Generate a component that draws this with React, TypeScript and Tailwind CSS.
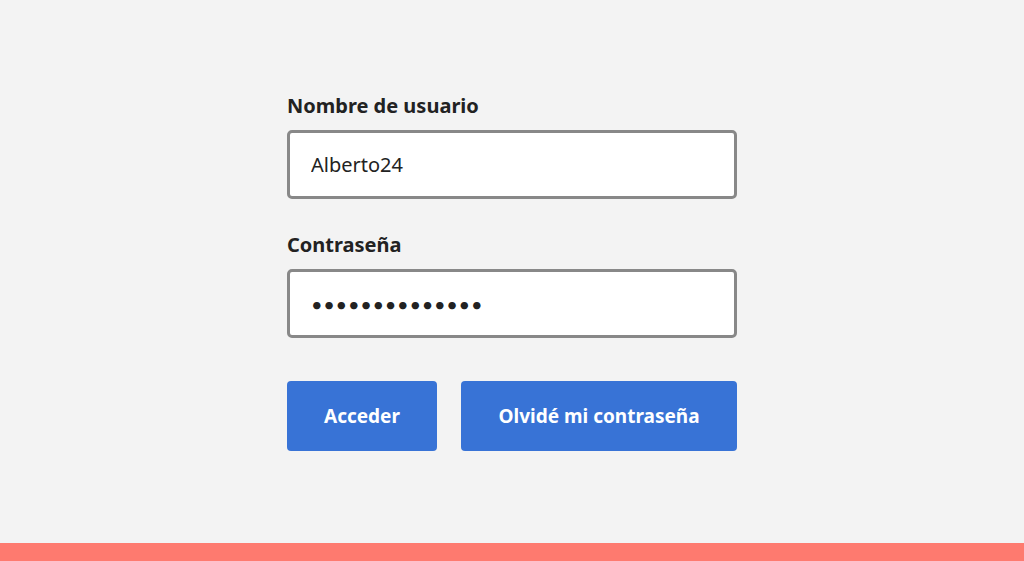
import React, { useState } from 'react'

const App: React.FC = () => {
  const [username, setUsername] = useState<string>('Alberto24')
  const [password, setPassword] = useState<string>('contraseña2024')

  return (
    <div
      className="flex min-h-[561px] w-full flex-col bg-[#f3f3f3]"
      style={{ fontFamily: '"Noto Sans", Lato, sans-serif' }}
    >
      <div className="flex flex-1 justify-center pt-[94px]">
        <form className="flex w-[450px] flex-col" onSubmit={(e) => e.preventDefault()}>
          {/* Username */}
          <label className="mb-[12px] text-[20px] font-bold leading-6 text-[#222]">
            Nombre de usuario
          </label>
          <input
            type="text"
            value={username}
            onChange={(e) => setUsername(e.target.value)}
            className="h-[69px] w-full rounded-[5px] border-[3px] border-[#888] bg-white px-[21px] text-[20px] text-[#222] outline-none"
          />

          {/* Password */}
          <label className="mb-[12px] mt-[34px] text-[20px] font-bold leading-6 text-[#222]">
            Contraseña
          </label>
          <input
            type="password"
            value={password}
            onChange={(e) => setPassword(e.target.value)}
            className="h-[69px] w-full rounded-[5px] border-[3px] border-[#888] bg-white px-[21px] font-['Lato'] text-[20px] tracking-[0.7px] text-[#222] outline-none"
          />

          {/* Actions */}
          <div className="mt-[43px] flex gap-6">
            <button
              type="submit"
              className="h-[70px] w-[150px] rounded-[4px] bg-[#3873d6] text-[19px] font-bold text-white"
            >
              Acceder
            </button>
            <button
              type="button"
              className="h-[70px] flex-1 rounded-[4px] bg-[#3873d6] text-[19px] font-bold text-white"
            >
              Olvidé mi contraseña
            </button>
          </div>
        </form>
      </div>
      <div className="h-[18px] w-full bg-[#fe7a6f]" />
    </div>
  )
}

export default App
